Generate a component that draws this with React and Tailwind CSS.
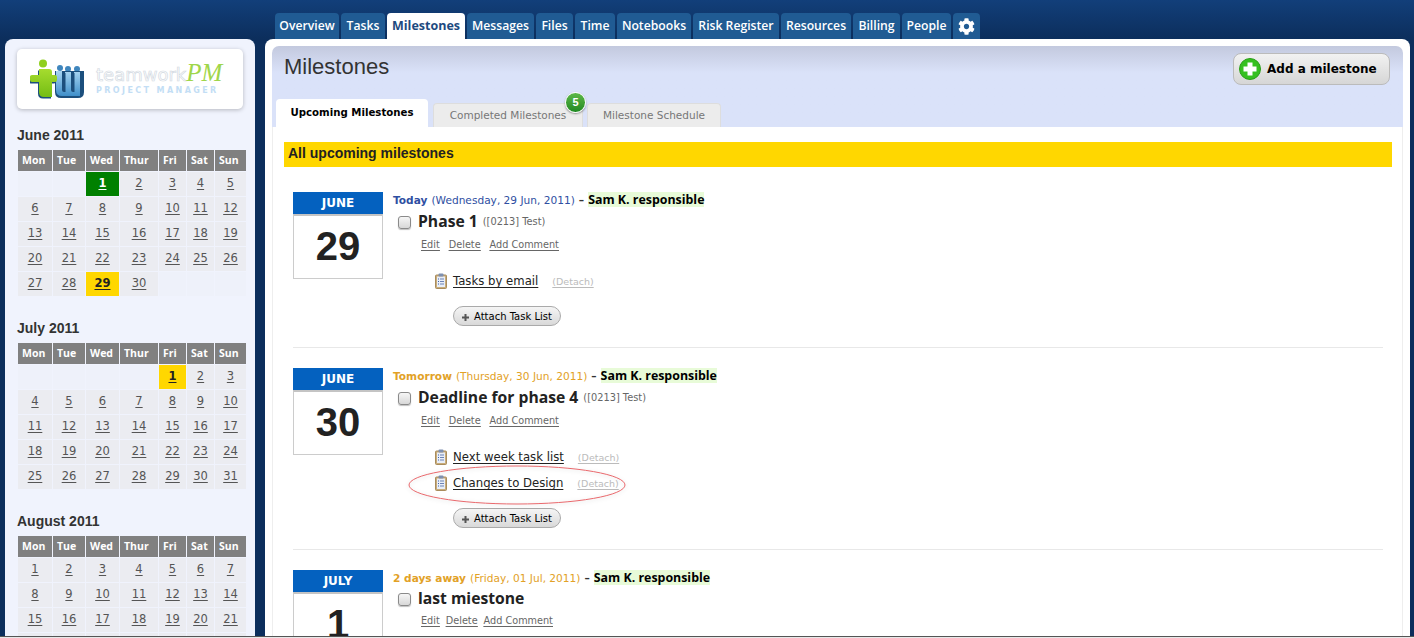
import { FaCog } from "react-icons/fa";

const ui = "font-['DejaVu_Sans',sans-serif]";
const boldUi = "font-['Open_Sans',sans-serif]";

const navTabs = ["Overview", "Tasks", "Milestones", "Messages", "Files", "Time", "Notebooks", "Risk Register", "Resources", "Billing", "People"];
const navWidths = [64, 44, 78, 67, 37, 40, 74, 86, 70, 47, 49];
const dayNames = ["Mon", "Tue", "Wed", "Thur", "Fri", "Sat", "Sun"];

const months = [
  { title: "June 2011", offset: 2, days: 30, green: 1, yellow: 29 },
  { title: "July 2011", offset: 4, days: 31, yellow: 1 },
  { title: "August 2011", offset: 0, days: 21, blankRow: true },
];

function MonthTable({ month }) {
  const cells = [];
  for (let i = 0; i < month.offset; i++) cells.push(null);
  for (let d = 1; d <= month.days; d++) cells.push(d);
  while (cells.length % 7 !== 0) cells.push(null);
  // the last row of August is cut off by the window, only its top shows
  if (month.blankRow) for (let i = 0; i < 7; i++) cells.push("");

  return (
    <div className="mb-[22px]">
      <h3 className="mb-[5px] ml-[12px] font-['Liberation_Sans',sans-serif] text-[14px] leading-[20px] font-bold text-[#333]">{month.title}</h3>
      <div className="ml-[13px] grid w-[228px] grid-cols-[34px_32px_33px_38px_27px_27px_31px] gap-px">
        {dayNames.map((name) => (
          <div key={name} className={`flex h-[21px] items-center bg-[#808080] pl-[4px] text-[10.5px] font-bold text-white ${boldUi}`}>
            {name}
          </div>
        ))}
        {cells.map((day, i) => {
          let cls = "bg-[#ebecf1] text-[#555]";
          if (day === null) cls = "bg-[#eef1fa]";
          if (day && day === month.green) cls = "bg-[#008000] font-bold text-white";
          if (day && day === month.yellow) cls = "bg-[#ffd700] font-bold text-[#222]";
          return (
            <div key={i} className={`flex h-[24px] items-center justify-center text-[11.5px] underline underline-offset-2 ${cls}`}>
              {day}
            </div>
          );
        })}
      </div>
    </div>
  );
}

function Logo() {
  const green = "M9 10h10q3 0 3 3v3h3q2 0 2 2v3q0 2-2 2h-3v15h-8q-5 0-5-5V23H2q-2 0-2-2v-3q0-2 2-2h7z";
  return (
    <svg width="56" height="42" viewBox="0 0 56 42" className="mt-[2px] shrink-0">
      <defs>
        <linearGradient id="logoBlue" x1="0" y1="0" x2="0" y2="1">
          <stop offset="0" stopColor="#a8d5f2" />
          <stop offset="1" stopColor="#3f8fca" />
        </linearGradient>
        <linearGradient id="logoGreen" x1="0" y1="0" x2="0" y2="1">
          <stop offset="0" stopColor="#a6dc2e" />
          <stop offset="1" stopColor="#74bd14" />
        </linearGradient>
      </defs>
      <circle cx="30" cy="9" r="3" fill="#3f86bd" />
      <circle cx="38" cy="10" r="3" fill="#3f86bd" />
      <circle cx="47" cy="10" r="3" fill="#3f86bd" />
      <path d="M25 12h29v21q0 6-6 6H31q-6 0-6-6z" fill="#1c4f7d" />
      <path d="M26 12h6v19q0 2 2 2h1V13h6v18q0 2 2 2h1V13h6v24H32q-6 0-6-6z" fill="url(#logoBlue)" />
      <path d="M35 14v19M44 14v19" stroke="#1c4f7d" strokeWidth="1" />
      <g transform="translate(-1 1.5)">
        <path d={green} fill="#1c4f7d" />
      </g>
      <path d={green} fill="url(#logoGreen)" />
      <circle cx="13" cy="4.5" r="4" fill="#8fcf1e" />
    </svg>
  );
}

function ListIcon() {
  return (
    <svg width="12" height="16" viewBox="0 0 12 16" className="mt-[-3px] shrink-0">
      <rect x="0.5" y="2" width="11" height="13.5" rx="1" fill="#c9ad7c" stroke="#a98c5c" />
      <rect x="2" y="3.5" width="8" height="10.5" fill="#e8eef8" />
      <rect x="3.5" y="0.5" width="5" height="3" rx="1" fill="#7e90b0" />
      <path d="M3 6h1M3 8.5h1M3 11h1" stroke="#3f5fa8" strokeWidth="1" />
      <path d="M5 6h4M5 8.5h4M5 11h4" stroke="#6d83b5" strokeWidth="1" />
    </svg>
  );
}

function CheckBox() {
  return <span className="block h-[13px] w-[13px] rounded-[3px] border border-[#8a8a8a] bg-gradient-to-b from-[#f6f6f6] to-[#d8d8d8] shadow-[0_1px_1px_rgba(0,0,0,0.25)]" />;
}

function AttachButton() {
  return (
    <div className="ml-[60px] flex h-[20px] w-[108px] items-center rounded-full border border-[#aaa] bg-gradient-to-b from-[#f5f5f5] to-[#d9d9d9] pl-[7px] text-[10px] text-black">
      <svg width="9" height="9" viewBox="0 0 9 9" className="mt-[2px] mr-[4px] shrink-0">
        <path d="M4.5 1v7M1 4.5h7" stroke="#555" strokeWidth="2" />
      </svg>
      Attach Task List
    </div>
  );
}

function TaskList({ name, circled }) {
  return (
    <div className="relative ml-[42px] flex h-[26px] items-center">
      {circled && (
        <svg width="220" height="42" viewBox="0 0 220 42" className="absolute top-[-6px] left-[-27px] drop-shadow-sm">
          <ellipse cx="109" cy="20" rx="108" ry="19" fill="none" stroke="#e9686c" strokeWidth="1" />
        </svg>
      )}
      <ListIcon />
      <a className="ml-[6px] text-[11.7px] text-[#222] underline underline-offset-2">{name}</a>
      <a className="ml-[14px] text-[9.5px] text-[#bbb] underline underline-offset-2">(Detach)</a>
    </div>
  );
}

function Milestone({ month, day, when, whenColor, whenDate, title, project, gaps, lists, last }) {
  return (
    <div className={last ? "flex" : "mb-[20px] flex border-b border-[#e8e8e8] pb-[21px]"}>
      <div className="w-[90px] shrink-0">
        <div className="flex h-[22px] items-center justify-center bg-[#0461bf] text-[12px] font-bold text-white">{month}</div>
        <div className="flex h-[65px] items-center justify-center border border-t-[2px] border-[#cccccc] border-t-[#c4c4c4] pb-[3px] font-['Liberation_Sans',sans-serif] text-[40px] font-bold text-[#222]">
          {day}
        </div>
      </div>
      <div className="ml-[10px] min-w-0">
        <div className="flex h-[17px] items-center text-[10.6px] whitespace-nowrap">
          <span className={`font-bold ${whenColor}`}>{when}</span>
          <span className={`ml-[4px] ${whenColor}`}>{whenDate}</span>
          <span className="mx-[4px] font-bold text-[#333]">–</span>
          <span className={`mt-[-2px] bg-[#e8fbd8] text-[12.4px] leading-[15px] font-bold text-black ${boldUi}`}>Sam K. responsible</span>
        </div>
        <div className={`ml-[5px] flex h-[22px] items-center ${last ? "mt-[1px]" : "mt-[2px]"}`}>
          <CheckBox />
          <span className={`ml-[7px] text-[15.7px] font-bold text-[#222] ${boldUi}`}>{title}</span>
          <span className="ml-[5px] text-[9.8px] text-[#666]">{project}</span>
        </div>
        <div className={`ml-[28px] flex h-[16px] items-center text-[9.7px] text-[#666] underline underline-offset-2 ${last ? "mt-[3px]" : "mt-[4px]"} ${gaps}`}>
          <a>Edit</a>
          <a>Delete</a>
          <a>Add Comment</a>
        </div>
        {lists && (
          <>
            <div className="mt-[16px]">
              {lists.map((list) => (
                <TaskList key={list.name} {...list} />
              ))}
            </div>
            <div className="mt-[11px]">
              <AttachButton />
            </div>
          </>
        )}
      </div>
    </div>
  );
}

export default function App() {
  return (
    <div className={`h-[638px] w-[1414px] overflow-hidden bg-[#e8e8e8] ${ui}`}>
      <div className="h-[636px] overflow-hidden bg-[#0c2e5c]">
        <div className="flex h-[39px] bg-gradient-to-b from-[#123f7a] to-[#0c2e5c] pt-[13px] pl-[275px]">
          {navTabs.map((tab, i) => (
            <div
              key={tab}
              style={{ width: navWidths[i] }}
              className={`mr-[2px] flex h-[26px] items-center justify-center rounded-t-[4px] pt-[1px] ${boldUi} ${
                tab === "Milestones" ? "bg-white text-[12.5px] font-bold text-[#1d4a80]" : "bg-[#205b93] text-[12.2px] font-semibold text-white"
              }`}
            >
              {tab}
            </div>
          ))}
          <div className="flex h-[26px] w-[27px] items-center justify-center rounded-t-[4px] bg-[#205b93]">
            <FaCog size={17} className="text-white" />
          </div>
        </div>

        <div className="flex items-start pr-[4px] pl-[5px]">
          <aside className="h-[620px] w-[250px] shrink-0 rounded-t-[8px] bg-[#f0f3fd] pt-[10px]">
            <div className="mx-[12px] flex h-[60px] w-[226px] items-center rounded-[5px] bg-white pl-[13px] shadow-[0_1px_4px_rgba(0,0,0,0.25)]">
              <Logo />
              <div className="ml-[10px] w-[130px]">
                <div className="flex items-baseline whitespace-nowrap">
                  <span className="text-[18px] leading-[20px] text-white [-webkit-text-stroke:0.7px_#d3dae2]">teamwork</span>
                  <span className="font-['Liberation_Serif',serif] text-[25px] leading-[20px] text-[#9fd64a] italic">PM</span>
                </div>
                <div className="mt-[1px] text-[8px] leading-[10px] font-bold tracking-[2.4px] whitespace-nowrap text-[#c3def5]">PROJECT MANAGER</div>
              </div>
            </div>
            <div className="mt-[16px]">
              {months.map((month) => (
                <MonthTable key={month.title} month={month} />
              ))}
            </div>
          </aside>

          <main className="ml-[10px] flex h-[620px] w-[1145px] flex-col rounded-t-[8px] bg-white px-[7px] pt-[7px]">
            <div className="relative h-[81px] shrink-0 rounded-t-[7px] bg-gradient-to-b from-[#c3c9de] via-[#dae2f9] via-[33%] to-[#dae2f9]">
              <h1 className="pt-[7px] pl-[12px] font-['Liberation_Sans',sans-serif] text-[22px] leading-[28px] text-[#333]">Milestones</h1>
              <div className="absolute top-[7px] right-[13px] flex h-[32px] w-[157px] items-center rounded-[8px] border border-[#bbb] bg-gradient-to-b from-[#f2f2f2] to-[#d6d6d6] pl-[5px] text-[12px] font-bold text-black">
                <svg width="22" height="22" viewBox="0 0 22 22">
                  <circle cx="11" cy="11" r="10.5" fill="#35c020" stroke="#2a9e18" />
                  <path d="M8.5 4.5h5v4h4v5h-4v4h-5v-4h-4v-5h4z" fill="#fff" />
                </svg>
                <span className="ml-[6px]">Add a milestone</span>
              </div>
              <div className="absolute bottom-0 left-[4px] flex items-end">
                <div className="flex h-[28px] w-[152px] items-center justify-center rounded-t-[4px] bg-white text-[10.2px] font-bold text-black">Upcoming Milestones</div>
                <div className="relative ml-[5px] flex h-[24px] w-[150px] items-center justify-center rounded-t-[4px] border border-b-0 border-[#ddd] bg-[#ececec] text-[10.5px] text-[#777]">
                  Completed Milestones
                  <span className="absolute top-[-12px] right-[-4px] flex h-[21px] w-[21px] items-center justify-center rounded-full border-[1.5px] border-white bg-gradient-to-b from-[#5cb848] to-[#1f8a23] font-['Liberation_Sans',sans-serif] text-[11px] font-bold text-white shadow-[0_1px_2px_rgba(0,0,0,0.4)]">
                    5
                  </span>
                </div>
                <div className="ml-[4px] flex h-[24px] w-[134px] items-center justify-center rounded-t-[4px] border border-b-0 border-[#ddd] bg-[#ececec] text-[10.5px] text-[#777]">
                  Milestone Schedule
                </div>
              </div>
            </div>

            <div className="flex-1 border-x border-[#eeeeee]">
              <div className="mt-[15px] ml-[11px] flex h-[25px] w-[1108px] items-center bg-[#ffd700] pb-[3px] pl-[4px] font-['Liberation_Sans',sans-serif] text-[14px] font-bold text-[#222]">
                All upcoming milestones
              </div>

              <div className="mt-[25px] ml-[20px] w-[1090px]">
                <Milestone
                  month="JUNE"
                  day="29"
                  when="Today"
                  whenColor="text-[#2f4fa2]"
                  whenDate="(Wednesday, 29 Jun, 2011)"
                  title="Phase 1"
                  project="([0213] Test)"
                  gaps="gap-[9px]"
                  lists={[{ name: "Tasks by email" }]}
                />
                <Milestone
                  month="JUNE"
                  day="30"
                  when="Tomorrow"
                  whenColor="text-[#e2a126]"
                  whenDate="(Thursday, 30 Jun, 2011)"
                  title="Deadline for phase 4"
                  project="([0213] Test)"
                  gaps="gap-[9px]"
                  lists={[{ name: "Next week task list" }, { name: "Changes to Design", circled: true }]}
                />
                <Milestone
                  month="JULY"
                  day="1"
                  when="2 days away"
                  whenColor="text-[#e2a126]"
                  whenDate="(Friday, 01 Jul, 2011)"
                  title="last miestone"
                  gaps="gap-[6px]"
                  last
                />
              </div>
            </div>
          </main>
        </div>
      </div>
      <div className="h-px bg-[#555]" />
    </div>
  );
}
